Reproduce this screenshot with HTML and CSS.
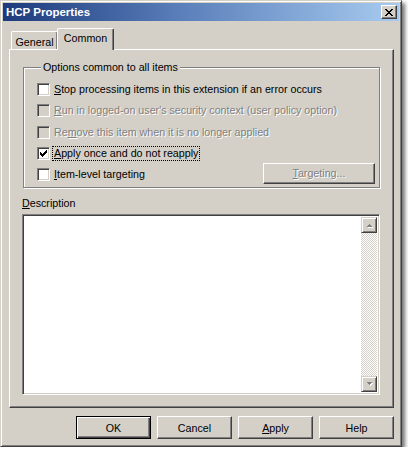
FILE: index.html
```html
<!DOCTYPE html>
<html>
<head>
<meta charset="utf-8">
<link rel="stylesheet" href="styles.css">
</head>
<body>
<div class="window">
  <div class="titlebar">
    <span class="title">HCP Properties</span>
    <span class="close-btn"><svg width="8" height="7" viewBox="0 0 8 7" shape-rendering="crispEdges"><path d="M0 0h2v1h-2zM6 0h2v1h-2zM1 1h2v1h-2zM5 1h2v1h-2zM2 2h4v1h-4zM3 3h2v1h-2zM2 4h4v1h-4zM1 5h2v1h-2zM5 5h2v1h-2zM0 6h2v1h-2zM6 6h2v1h-2z" fill="#000"/></svg></span>
  </div>
  <div class="client">
    <div class="tabs">
      <div class="tab">General</div>
      <div class="tab active">Common</div>
    </div>
    <div class="panel">
      <fieldset class="group">
        <legend>Options common to all items</legend>
        <div class="row"><span class="cb"></span><span class="lbl"><u>S</u>top processing items in this extension if an error occurs</span></div>
        <div class="row disabled"><span class="cb"></span><span class="lbl"><u>R</u>un in logged-on user's security context (user policy option)</span></div>
        <div class="row disabled"><span class="cb"></span><span class="lbl">Re<u>m</u>ove this item when it is no longer applied</span></div>
        <div class="row"><span class="cb"><svg width="13" height="13" viewBox="0 0 13 13" shape-rendering="crispEdges"><polygon points="3,5 5,7 10,2 10,5 5,10 3,8" fill="#000"/></svg></span><span class="lbl focus"><u>A</u>pply once and do not reapply</span></div>
        <div class="row last"><span class="cb"></span><span class="lbl"><u>I</u>tem-level targeting</span><span class="btn small disabled"><span><u>T</u>argeting...</span></span></div>
      </fieldset>
      <div class="desc-label"><u>D</u>escription</div>
      <div class="textarea">
        <div class="text"></div>
        <div class="scrollbar">
          <span class="sbtn"><svg width="7" height="5" viewBox="0 0 7 5" shape-rendering="crispEdges"><polygon points="1,5 4,2 7,5" fill="#fff"/><polygon points="0,4 3,1 6,4" fill="#808080"/></svg></span>
          <span class="track"></span>
          <span class="sbtn"><svg width="7" height="5" viewBox="0 0 7 5" shape-rendering="crispEdges"><polygon points="1,1 7,1 4,4" fill="#fff"/><polygon points="0,0 6,0 3,3" fill="#808080"/></svg></span>
        </div>
      </div>
    </div>
    <div class="buttons">
      <span class="btn default">OK</span>
      <span class="btn">Cancel</span>
      <span class="btn"><span><u>A</u>pply</span></span>
      <span class="btn">Help</span>
    </div>
  </div>
</div>
</body>
</html>
```
FILE: styles.css
```css
html, body {
  margin: 0;
  padding: 0;
  background: #ffffff;
}
body {
  font-family: "Liberation Sans", Arial, sans-serif;
  font-size: 10.7px;
  color: #000;
}
u { text-decoration: underline; text-underline-offset: 1px; }

.window {
  width: 402px;
  height: 447px;
  box-sizing: border-box;
  background: #d4d0c8;
  border: 1px solid;
  border-color: #d4d0c8 #404040 #404040 #d4d0c8;
  box-shadow: inset 1px 1px 0 #fff, inset -1px -1px 0 #808080, 3px 3px 4px rgba(0,0,0,0.55);
  padding: 2px;
  display: flex;
  flex-direction: column;
}

.titlebar {
  height: 18px;
  flex: none;
  display: flex;
  align-items: center;
  justify-content: space-between;
  padding: 0 2px 0 3px;
  background: linear-gradient(90deg, #1c3a7c 0%, #5a7fba 45%, #a8cbf0 100%);
}
.title {
  color: #fff;
  font-weight: bold;
  font-size: 11.5px;
}
.close-btn {
  width: 16px;
  height: 14px;
  box-sizing: border-box;
  background: #d4d0c8;
  border: 1px solid;
  border-color: #fff #404040 #404040 #fff;
  box-shadow: inset -1px -1px 0 #808080;
  display: flex;
  align-items: center;
  justify-content: center;
}

.client {
  flex: 1;
  display: flex;
  flex-direction: column;
  padding: 7px 5px 0 6px;
}

.tabs {
  display: flex;
  align-items: flex-end;
  padding-left: 2px;
  height: 21px;
  flex: none;
}
.tab {
  height: 18px;
  width: 47px;
  box-sizing: border-box;
  border: 1px solid;
  border-bottom: none;
  border-color: #fff #404040 #fff #fff;
  box-shadow: inset -1px 0 0 #808080;
  border-radius: 2px 2px 0 0;
  display: flex;
  align-items: center;
  justify-content: center;
  padding-top: 2px;
}
.tab.active {
  height: 22px;
  width: 57px;
  margin-bottom: -1px;
  margin-left: -1px;
  background: #d4d0c8;
  position: relative;
  z-index: 1;
  padding-top: 0;
  padding-bottom: 3px;
}

.panel {
  height: 359px;
  flex: none;
  box-sizing: border-box;
  border: 1px solid;
  border-color: #fff #404040 #404040 #fff;
  box-shadow: inset -1px -1px 0 #808080;
  padding: 0 13px 0 13px;
  display: flex;
  flex-direction: column;
}

.group {
  margin: 11px 0 0 0;
  padding: 5px 0 4px 13px;
  border: 1px solid #808080;
  box-shadow: inset 1px 1px 0 #fff, 1px 1px 0 #fff;
  height: 127px;
  box-sizing: border-box;
  min-width: 0;
}
.group legend {
  padding: 0 2px;
  margin-left: 4px;
  background: #d4d0c8;
  line-height: 13px;
}

.row {
  height: 21.3px;
  display: flex;
  align-items: center;
}
.cb {
  width: 13px;
  height: 13px;
  box-sizing: border-box;
  flex: none;
  background: #fff;
  border: 1px solid;
  border-color: #808080 #fff #fff #808080;
  box-shadow: inset 1px 1px 0 #404040, inset -1px -1px 0 #d4d0c8;
  margin-right: 4px;
  position: relative;
}
.cb svg {
  position: absolute;
  left: -1px;
  top: -1px;
}
.row.disabled .cb { background: #d4d0c8; }
.row.disabled .lbl, .btn.disabled {
  color: #808080;
  text-shadow: 1px 1px 0 #fff;
}
.lbl {
  white-space: nowrap;
  line-height: 13px;
}
.lbl.focus {
  outline: 1px dotted #000;
  outline-offset: 0;
  padding: 0 1px;
  margin-left: -1px;
}

.btn {
  width: 75px;
  height: 23px;
  box-sizing: border-box;
  border: 1px solid;
  border-color: #fff #404040 #404040 #fff;
  box-shadow: inset -1px -1px 0 #808080;
  display: flex;
  align-items: center;
  justify-content: center;
  background: #d4d0c8;
}
.btn.small {
  width: 112px;
  height: 21px;
  margin-left: auto;
  margin-right: 4px;
  margin-top: -3px;
}
.btn.default {
  border: 1px solid #000;
  box-shadow: inset 1px 1px 0 #fff, inset -1px -1px 0 #404040, inset -2px -2px 0 #808080;
}

.desc-label {
  margin-top: 9px;
  height: 13px;
  line-height: 13px;
  margin-left: -1px;
}
.textarea {
  margin-top: 4px;
  margin-left: -1px;
  height: 181px;
  box-sizing: border-box;
  border: 1px solid;
  border-color: #808080 #fff #fff #808080;
  box-shadow: inset 1px 1px 0 #404040, inset -1px -1px 0 #d4d0c8;
  background: #fff;
  padding: 2px 2px 2px 2px;
  display: flex;
}
.text { flex: 1; }
.scrollbar {
  width: 16px;
  display: flex;
  flex-direction: column;
}
.sbtn {
  width: 16px;
  height: 16px;
  flex: none;
  box-sizing: border-box;
  background: #d4d0c8;
  border: 1px solid;
  border-color: #d4d0c8 #404040 #404040 #d4d0c8;
  box-shadow: inset 1px 1px 0 #fff, inset -1px -1px 0 #808080;
  display: flex;
  align-items: center;
  justify-content: center;
}
.track {
  flex: 1;
  background: repeating-conic-gradient(#fff 0 25%, #d4d0c8 0 50%) 0 0 / 2px 2px;
}

.buttons {
  display: flex;
  justify-content: flex-end;
  gap: 6px;
  margin-top: 8px;
}
```
